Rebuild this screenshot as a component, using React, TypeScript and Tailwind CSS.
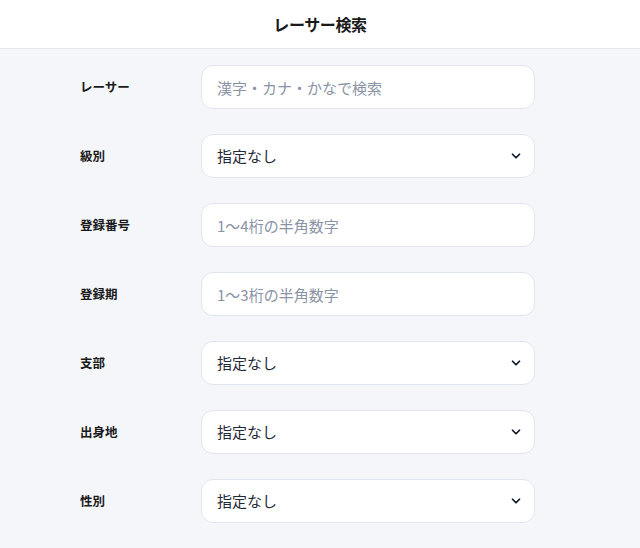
import React from 'react';

type Field = { label: string; kind: 'input' | 'select'; placeholder?: string; value?: string };

const fields: Field[] = [
  { label: 'レーサー', kind: 'input', placeholder: '漢字・カナ・かなで検索' },
  { label: '級別', kind: 'select', value: '指定なし' },
  { label: '登録番号', kind: 'input', placeholder: '1〜4桁の半角数字' },
  { label: '登録期', kind: 'input', placeholder: '1〜3桁の半角数字' },
  { label: '支部', kind: 'select', value: '指定なし' },
  { label: '出身地', kind: 'select', value: '指定なし' },
  { label: '性別', kind: 'select', value: '指定なし' },
];

const Chevron = () => (
  <svg width="14" height="14" viewBox="0 0 24 24" fill="none" stroke="#111827" strokeWidth="3" strokeLinecap="round" strokeLinejoin="round">
    <path d="M6 9l6 6 6-6" />
  </svg>
);

export default function App() {
  return (
    <div className="min-h-screen bg-[#f5f6fa] font-['Noto_Sans_CJK_JP','Noto_Sans',sans-serif]">
      <header className="h-[49px] bg-white border-b border-[#e3e6ec] flex items-center justify-center">
        <h1 className="text-[16px] font-bold text-[#1a1a1a] tracking-tight">レーサー検索</h1>
      </header>
      <div className="pl-[80px] pt-[16px] flex flex-col gap-[25px]">
        {fields.map((f, i) => (
          <div key={i} className="flex items-center">
            <label className="w-[121px] text-[12.5px] font-bold text-[#1a1a1a]">{f.label}</label>
            {f.kind === 'input' ? (
              <input
                placeholder={f.placeholder}
                className="w-[334px] h-[44px] bg-white border border-[#e1e5ed] rounded-[12px] px-[15px] text-[15px] text-[#1f2937] placeholder:text-[#8a93a5] outline-none"
              />
            ) : (
              <div className="w-[334px] h-[44px] bg-white border border-[#e1e5ed] rounded-[12px] pl-[15px] pr-[11px] flex items-center justify-between">
                <span className="text-[15px] text-[#1f2937]">{f.value}</span>
                <Chevron />
              </div>
            )}
          </div>
        ))}
      </div>
    </div>
  );
}
